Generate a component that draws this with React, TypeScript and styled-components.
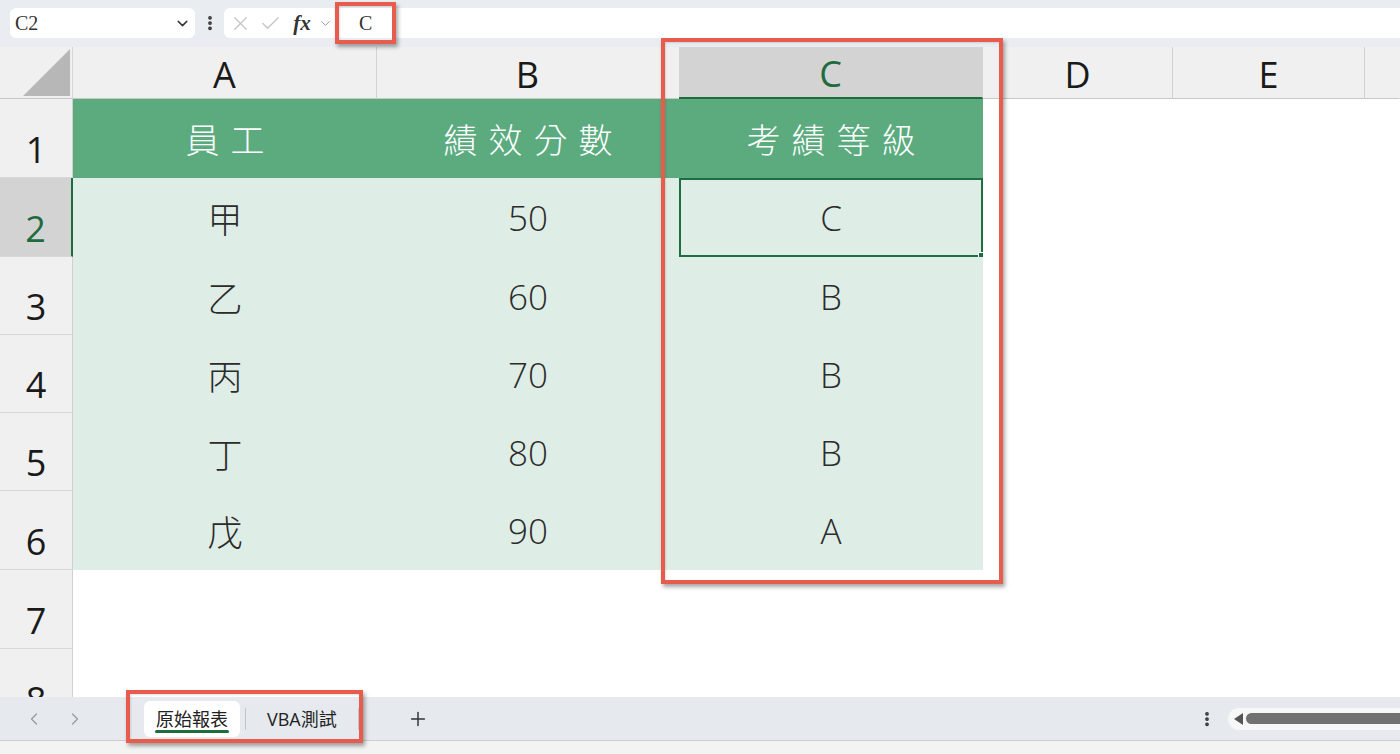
import React from 'react';
import styled, { createGlobalStyle, css } from 'styled-components';
import { ChevronDown, ChevronLeft, ChevronRight, Plus, X, Check, EllipsisVertical } from 'lucide-react';

const GlobalStyle = createGlobalStyle`
  html, body { margin: 0; padding: 0; background: #fff; }
  body { font-family: "Open Sans", "Noto Sans CJK TC", sans-serif; }
  #root { width: 1400px; height: 754px; overflow: hidden; }
`;

const Screen = styled.div`
  position: relative;
  width: 1400px;
  height: 754px;
  display: flex;
  flex-direction: column;
  background: #fff;
  overflow: hidden;
`;

/* ---------- formula bar ---------- */
const TopBar = styled.div`
  flex: none;
  height: 47px;
  box-sizing: border-box;
  padding: 8px 0 0 10px;
  background: #e9ecf0;
  display: flex;
  align-items: flex-start;
`;

const NameBox = styled.div`
  width: 185px;
  height: 30px;
  box-sizing: border-box;
  padding: 0 4px 0 5px;
  background: #fff;
  border-radius: 6px;
  display: flex;
  align-items: center;
  justify-content: space-between;
  font-family: "Liberation Serif", serif;
  font-size: 20px;
  color: #333;
`;

const BarDots = styled.div`
  width: 29px;
  height: 30px;
  display: flex;
  align-items: center;
  justify-content: center;
  color: #333;
`;

const FormulaControls = styled.div`
  width: 112px;
  height: 30px;
  box-sizing: border-box;
  padding-left: 2px;
  background: #fff;
  border-radius: 6px 0 0 6px;
  display: flex;
  align-items: center;
`;

const CtrlIcon = styled.span<{ $w: number }>`
  width: ${p => p.$w}px;
  display: flex;
  align-items: center;
  justify-content: center;
  color: #c4c4c4;
`;

const Fx = styled.span`
  width: 30px;
  text-align: center;
  font-family: "Liberation Serif", serif;
  font-style: italic;
  font-weight: bold;
  font-size: 21px;
  color: #333;
`;

const FormulaInput = styled.div`
  flex: 1;
  height: 30px;
  margin-left: 3px;
  box-sizing: border-box;
  padding-left: 20px;
  background: #fff;
  display: flex;
  align-items: center;
  font-family: "Liberation Serif", serif;
  font-size: 20px;
  color: #333;
`;

/* ---------- sheet grid ---------- */
const Sheet = styled.div`
  flex: none;
  height: 650px;
  display: grid;
  grid-template-columns: 73px 304px 302px 304px 190px 192px 1fr;
  grid-template-rows: 52px 79px 79px 78px 78px 78px 79px 79px 79px;
  overflow: hidden;
`;

const Corner = styled.div`
  background: #f0f0f0;
  border-right: 1px solid #d6d6d6;
  border-bottom: 1px solid #c8c8c8;
  display: flex;
  align-items: flex-end;
  justify-content: flex-end;
  padding: 0 2px 2px 0;
`;

const ColHeader = styled.div<{ $sel?: boolean; $sep?: boolean }>`
  background: ${p => (p.$sel ? '#d3d3d3' : '#f0f0f0')};
  border-bottom: ${p => (p.$sel ? '2px solid #1e6b3e' : '1px solid #c8c8c8')};
  border-right: 1px solid ${p => (p.$sep ? '#d2d2d2' : 'transparent')};
  display: flex;
  align-items: center;
  justify-content: center;
  padding-top: 3px;
  font-family: "Open Sans", sans-serif;
  font-size: 36px;
  color: ${p => (p.$sel ? '#1e6b3e' : '#1a1a1a')};
`;

const RowHeader = styled.div<{ $sel?: boolean }>`
  background: ${p => (p.$sel ? '#d3d3d3' : '#f0f0f0')};
  border-right: ${p => (p.$sel ? '2px solid #1e6b3e' : '1px solid #d0d0d0')};
  border-bottom: 1px solid #d8d8d8;
  display: flex;
  align-items: flex-end;
  justify-content: center;
  padding-bottom: 3px;
  font-family: "Open Sans", sans-serif;
  font-size: 36px;
  color: ${p => (p.$sel ? '#1e6b3e' : '#1a1a1a')};
`;

const Cell = styled.div<{ $kind: 'head' | 'data' | 'empty'; $sel?: boolean }>`
  position: relative;
  display: flex;
  align-items: center;
  justify-content: center;
  font-family: "Open Sans", "Noto Sans CJK TC", sans-serif;
  font-size: 35px;
  font-weight: 300;
  ${p =>
    p.$kind === 'head' &&
    css`
      background: #5bab7f;
      color: #fff;
      font-size: 34px;
      letter-spacing: 11px;
      padding-left: 11px;
    `}
  ${p =>
    p.$kind === 'data' &&
    css`
      background: #deede5;
      color: #2b2b2b;
    `}
  ${p =>
    p.$kind === 'empty' &&
    css`
      background: #fff;
    `}
  ${p =>
    p.$sel &&
    css`
      box-shadow: inset 0 0 0 2px #1f6e43;
      &::after {
        content: '';
        position: absolute;
        right: -3px;
        bottom: -3px;
        width: 6px;
        height: 6px;
        background: #1f6e43;
        border: 1px solid #fff;
      }
    `}
`;

/* ---------- sheet tabs ---------- */
const BottomBar = styled.div`
  flex: none;
  height: 43px;
  background: #e6e9ee;
  display: flex;
  align-items: center;
  padding-left: 20px;
  box-sizing: border-box;
`;

const NavArrow = styled.span`
  width: 27px;
  margin-right: 14px;
  display: flex;
  justify-content: center;
  color: #9a9a9a;
`;

const TabList = styled.div`
  margin-left: 42px;
  display: flex;
  align-items: center;
`;

const Tab = styled.div<{ $active?: boolean }>`
  position: relative;
  height: 36px;
  box-sizing: border-box;
  padding: 0 ${p => (p.$active ? 12 : 16)}px 2px;
  border-radius: 6px;
  background: ${p => (p.$active ? '#fff' : 'transparent')};
  display: flex;
  align-items: center;
  font-family: "Open Sans", "Noto Sans CJK TC", sans-serif;
  font-size: 18px;
  color: #222;
  ${p =>
    p.$active &&
    css`
      &::after {
        content: '';
        position: absolute;
        left: 11px;
        right: 11px;
        bottom: 4px;
        height: 3px;
        border-radius: 2px;
        background: #1e6b3e;
      }
    `}
`;

const TabSep = styled.span`
  width: 1px;
  height: 22px;
  margin: 0 5px;
  background: #c4c4c4;
`;

const AddSheet = styled.span`
  margin-left: 43px;
  display: flex;
  color: #333;
`;

const Spacer = styled.div`
  flex: 1;
`;

const MoreDots = styled.span`
  display: flex;
  color: #333;
  margin-right: 12px;
`;

const ScrollTrack = styled.div`
  width: 172px;
  height: 22px;
  background: #f7f7f8;
  border-radius: 11px 0 0 11px;
  display: flex;
  align-items: center;
  padding-left: 6px;
  box-sizing: border-box;
  gap: 3px;
`;

const ScrollThumb = styled.div`
  flex: 1;
  height: 11px;
  border-radius: 6px 0 0 6px;
  background: #717171;
`;

const StatusStrip = styled.div`
  flex: 1;
  background: #f3f3f3;
  border-top: 1px solid #cdcdcd;
`;

/* ---------- annotation boxes ---------- */
const Highlight = styled.div`
  position: absolute;
  box-sizing: border-box;
  border: 4px solid #e85c4d;
  box-shadow: 2px 3px 4px rgba(0, 0, 0, 0.35), inset 1px 1px 2px rgba(0, 0, 0, 0.12);
  pointer-events: none;
`;

const rows = [
  { n: 1, kind: 'head' as const, vals: ['員工', '績效分數', '考績等級'] },
  { n: 2, kind: 'data' as const, vals: ['甲', '50', 'C'] },
  { n: 3, kind: 'data' as const, vals: ['乙', '60', 'B'] },
  { n: 4, kind: 'data' as const, vals: ['丙', '70', 'B'] },
  { n: 5, kind: 'data' as const, vals: ['丁', '80', 'B'] },
  { n: 6, kind: 'data' as const, vals: ['戊', '90', 'A'] },
];

export default function App() {
  return (
    <Screen>
      <GlobalStyle />
      <TopBar>
        <NameBox>
          <span>C2</span>
          <ChevronDown size={17} strokeWidth={2} color="#333" />
        </NameBox>
        <BarDots>
          <EllipsisVertical size={18} strokeWidth={3} />
        </BarDots>
        <FormulaControls>
          <CtrlIcon $w={28}>
            <X size={23} strokeWidth={1.3} />
          </CtrlIcon>
          <CtrlIcon $w={33}>
            <Check size={23} strokeWidth={1.3} />
          </CtrlIcon>
          <Fx>fx</Fx>
          <CtrlIcon $w={16}>
            <ChevronDown size={15} strokeWidth={1.6} color="#9a9a9a" />
          </CtrlIcon>
        </FormulaControls>
        <FormulaInput>C</FormulaInput>
      </TopBar>

      <Sheet>
        <Corner>
          <svg width="47" height="47" viewBox="0 0 47 47">
            <polygon points="47,0 47,47 0,47" fill="#b7b7b7" />
          </svg>
        </Corner>
        <ColHeader $sep>A</ColHeader>
        <ColHeader>B</ColHeader>
        <ColHeader $sel>C</ColHeader>
        <ColHeader $sep>D</ColHeader>
        <ColHeader $sep>E</ColHeader>
        <ColHeader />

        {rows.map(r => (
          <React.Fragment key={r.n}>
            <RowHeader $sel={r.n === 2}>{r.n}</RowHeader>
            {r.vals.map((v, i) => (
              <Cell key={i} $kind={r.kind} $sel={r.n === 2 && i === 2}>
                {v}
              </Cell>
            ))}
            <Cell $kind="empty" />
            <Cell $kind="empty" />
            <Cell $kind="empty" />
          </React.Fragment>
        ))}

        {[7, 8].map(n => (
          <React.Fragment key={n}>
            <RowHeader>{n}</RowHeader>
            {[0, 1, 2, 3, 4, 5].map(i => (
              <Cell key={i} $kind="empty" />
            ))}
          </React.Fragment>
        ))}
      </Sheet>

      <BottomBar>
        <NavArrow>
          <ChevronLeft size={20} strokeWidth={1.5} />
        </NavArrow>
        <NavArrow>
          <ChevronRight size={20} strokeWidth={1.5} />
        </NavArrow>
        <TabList>
          <Tab $active>原始報表</Tab>
          <TabSep />
          <Tab>VBA測試</Tab>
          <TabSep />
        </TabList>
        <AddSheet>
          <Plus size={22} strokeWidth={1.6} />
        </AddSheet>
        <Spacer />
        <MoreDots>
          <EllipsisVertical size={18} strokeWidth={3} />
        </MoreDots>
        <ScrollTrack>
          <svg width="9" height="12" viewBox="0 0 9 12">
            <polygon points="9,0 9,12 0,6" fill="#555" />
          </svg>
          <ScrollThumb />
        </ScrollTrack>
      </BottomBar>
      <StatusStrip />

      <Highlight style={{ left: 335, top: 2, width: 61, height: 42 }} />
      <Highlight style={{ left: 661, top: 38, width: 342, height: 546 }} />
      <Highlight style={{ left: 126, top: 690, width: 237, height: 53 }} />
    </Screen>
  );
}
